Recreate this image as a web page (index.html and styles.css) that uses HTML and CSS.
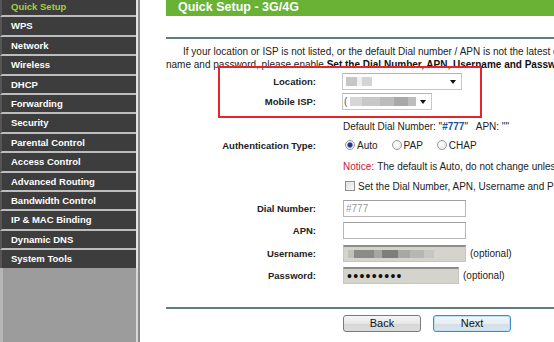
FILE: index.html
```html
<!DOCTYPE html>
<html>
<head>
<meta charset="utf-8">
<link rel="stylesheet" href="styles.css">
</head>
<body>
<div class="page">
  <aside class="side">
    <ul class="menu">
      <li class="item active">Quick Setup</li>
      <li class="item">WPS</li>
      <li class="item">Network</li>
      <li class="item">Wireless</li>
      <li class="item">DHCP</li>
      <li class="item">Forwarding</li>
      <li class="item">Security</li>
      <li class="item">Parental Control</li>
      <li class="item">Access Control</li>
      <li class="item">Advanced Routing</li>
      <li class="item">Bandwidth Control</li>
      <li class="item">IP &amp; MAC Binding</li>
      <li class="item">Dynamic DNS</li>
      <li class="item">System Tools</li>
    </ul>
    <div class="side-fill"></div>
  </aside>
  <main class="main">
    <div class="title">Quick Setup - 3G/4G</div>
    <div class="rule rule-top"></div>
    <p class="intro">
      <span class="line first">If your location or ISP is not listed, or the default Dial number / APN is not the latest or your ISP requires the user</span>
      <span class="line">name and password, please enable <b>Set the Dial Number, APN, Username and Password</b> manually.</span>
    </p>
    <div class="form">
      <div class="label">Location:</div>
      <div class="field"><div class="select sel-loc"><span class="blur blur-loc"></span><span class="arrow"></span></div></div>

      <div class="label">Mobile ISP:</div>
      <div class="field"><div class="select sel-isp"><span class="paren">(</span><span class="blur blur-isp"></span><span class="arrow"></span></div></div>

      <div class="label"></div>
      <div class="field end">Default Dial Number: "<b class="num">#777</b>"&nbsp;&nbsp; APN: ""</div>

      <div class="label">Authentication Type:</div>
      <div class="field radios">
        <span class="opt"><span class="radio checked"></span>Auto</span>
        <span class="opt"><span class="radio"></span>PAP</span>
        <span class="opt"><span class="radio"></span>CHAP</span>
      </div>

      <div class="label"></div>
      <div class="field nowrap"><span class="notice">Notice:</span> The default is Auto, do not change unless necessary.</div>

      <div class="label"></div>
      <div class="field nowrap"><span class="check"></span>Set the Dial Number, APN, Username and Password manually</div>

      <div class="label">Dial Number:</div>
      <div class="field"><div class="input"><span class="ph">#777</span></div></div>

      <div class="label">APN:</div>
      <div class="field"><div class="input"></div></div>

      <div class="label">Username:</div>
      <div class="field"><div class="input disabled"><span class="blur blur-user"></span></div><span class="opt-text">(optional)</span></div>

      <div class="label">Password:</div>
      <div class="field"><div class="input disabled pw"><span class="dots">•••••••••</span></div><span class="opt-text">(optional)</span></div>
    </div>
    <div class="rule rule-bottom"></div>
    <div class="buttons">
      <button class="btn">Back</button>
      <button class="btn primary">Next</button>
    </div>
    <div class="highlight"></div>
  </main>
</div>
</body>
</html>
```
FILE: styles.css
```css
* { box-sizing: border-box; }
html, body { margin: 0; padding: 0; background: #fff; }
body { font-family: "Liberation Sans", Arial, sans-serif; color: #222; }

.page {
  display: flex;
  width: 554px;
  height: 342px;
  overflow: hidden;
}

/* sidebar */
.side {
  width: 140px;
  flex: none;
  display: flex;
  flex-direction: column;
  border-right: 2px solid #8a8a8a;
}
.menu {
  list-style: none;
  margin: -2px 0 0 0;
  padding: 0;
  border-right: 2px solid #e2e2e2;
}
.item {
  height: 19.42px;
  background: #3d3d3d;
  border-bottom: 2px solid #bdbdbd;
  border-left: 2px solid #555;
  padding-left: 9px;
  color: #fff;
  font-weight: bold;
  font-size: 9.5px;
  line-height: 17.4px;
  white-space: nowrap;
}
.item:last-child { border-bottom: none; height: 17.42px; }
.item.active { color: #a3cf3c; }
.side-fill {
  flex: 1;
  background: #9c9c9c;
  border-left: 3px solid #b6b6b6;
  border-right: 2px solid #d8d8d8;
}

/* main */
.main {
  flex: 1;
  min-width: 0;
  position: relative;
  padding-left: 26px;
  overflow: hidden;
}
.title {
  height: 16px;
  background: #69b236;
  color: #fff;
  font-weight: bold;
  font-size: 12.5px;
  line-height: 14px;
  padding-left: 12px;
  white-space: nowrap;
}
.rule {
  height: 2px;
  background: #5f7d7d;
  width: 400px;
}
.rule-top { margin-top: 21px; }
.rule-bottom { margin-top: 22px; }

.intro {
  margin: 5.5px 0 0 0;
  font-size: 10px;
  line-height: 13px;
  white-space: nowrap;
}
.intro .line { display: block; }
.intro .first { padding-left: 17px; }
.intro b { color: #111; }

.form {
  display: grid;
  grid-template-columns: 150px 1fr;
  column-gap: 26px;
  grid-template-rows: 20px 21px 21px 24px 18px 22px 23px 21px 24px 20px;
  margin-top: 0.5px;
  font-size: 10px;
}
.label {
  text-align: right;
  font-weight: bold;
  font-size: 9.5px;
  color: #222;
  display: flex;
  align-items: center;
  justify-content: flex-end;
  white-space: nowrap;
}
.field {
  display: flex;
  align-items: center;
  white-space: nowrap;
  padding-left: 1px;
}
.field.end { align-items: flex-end; padding-bottom: 1px; }
.num { color: #1c4f9c; }
.notice { color: #d0103a; margin-right: 3px; }

.select {
  position: relative;
  height: 17px;
  background: #fff;
  border: 1px solid #c4c8cc;
  border-top-color: #b0b4b8;
  display: flex;
  align-items: center;
  margin-left: -1px;
}
.sel-loc { width: 120px; }
.sel-isp { width: 90px; }
.arrow {
  position: absolute;
  right: 5px;
  top: 6px;
  width: 0;
  height: 0;
  border-left: 3.5px solid transparent;
  border-right: 3.5px solid transparent;
  border-top: 4px solid #111;
}
.blur { display: block; height: 9px; }
.blur-loc {
  margin-left: 3px;
  width: 28px;
  background: linear-gradient(90deg, #c6c6c6 0 11px, #f0f0f0 11px 16px, #d4d4d4 16px 26px, #fff 26px);
}
.paren { font-size: 10px; margin-left: 1px; color: #555; }
.blur-isp {
  margin-left: 3px;
  width: 66px;
  background: linear-gradient(90deg, #d6d6d6 0 12px, #c8c8c8 12px 30px, #bcbcbc 30px 44px, #a9a9a9 44px 58px, #bdbdbd 58px 66px);
}

.radios { gap: 0; }
.opt { display: inline-flex; align-items: center; margin-right: 14px; margin-left: 2px; }
.opt + .opt { margin-left: 0; }
.radio {
  width: 10px;
  height: 10px;
  border-radius: 50%;
  border: 1px solid #9a9a9a;
  background: radial-gradient(circle at 40% 40%, #fff, #e2e2e2);
  margin-right: 2px;
  display: inline-block;
}
.radio.checked {
  background: radial-gradient(circle, #1e3f7a 0 2px, #6b8fc4 2.5px, #f2f2f2 3.2px);
}
.check {
  width: 10px;
  height: 10px;
  border: 1px solid #8f8f8f;
  background: linear-gradient(135deg, #e0e0e0, #fafafa);
  margin-left: 2px;
  margin-right: 3px;
  display: inline-block;
}

.input {
  width: 123px;
  height: 17px;
  border: 1px solid #b6b6b6;
  border-top-color: #a0a0a0;
  background: #fff;
  display: flex;
  align-items: center;
  padding-left: 2px;
}
.ph { color: #9a9a9a; font-size: 10px; }
.input.disabled {
  background: #d5d4cc;
  border: 1px solid #c6c6c0;
  border-top: 2px solid #8c8c88;
}
.blur-user {
  margin-left: 2px;
  width: 86px;
  height: 8px;
  background: linear-gradient(90deg, #c0c0bc 0 6px, #8a8a88 6px 26px, #a6a6a4 26px 34px, #7e7e7c 34px 50px, #a8a8a6 50px 62px, #b6b6b2 62px 76px, #c6c6c2 76px 86px);
}
.input.pw { width: 116px; }
.dots {
  font-size: 14px;
  letter-spacing: 1.3px;
  color: #111;
  line-height: 12px;
  margin-left: 1px;
}
.opt-text { margin-left: 4px; font-size: 10px; }

.buttons {
  margin-top: 6px;
  padding-left: 177px;
  display: flex;
  gap: 12px;
}
.btn {
  width: 78px;
  height: 17px;
  padding: 0;
  font-family: "Liberation Sans", Arial, sans-serif;
  font-size: 11px;
  color: #111;
  border: 1px solid #7a7a7a;
  border-radius: 3px;
  background: linear-gradient(#f6f6f6, #e6e6e6 50%, #d6d6d6 51%, #dcdcdc);
  line-height: 15px;
}
.btn.primary {
  border-color: #3d8dc4;
  box-shadow: inset 0 0 0 1px #bfe0f3;
  background: linear-gradient(#f2f7fa, #e4eef4 50%, #d2dfe8 51%, #dbe6ec);
}

.highlight {
  position: absolute;
  left: 78px;
  top: 66px;
  width: 264px;
  height: 52px;
  border: 2px solid #e3262a;
  pointer-events: none;
}
```
